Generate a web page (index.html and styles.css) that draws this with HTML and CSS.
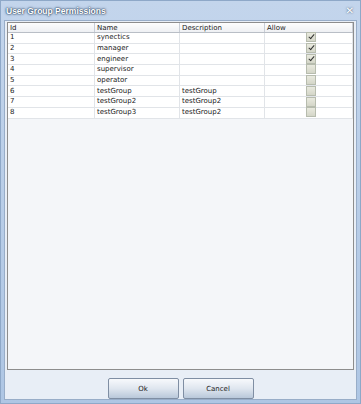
FILE: index.html
```html
<!DOCTYPE html>
<html lang="en">
<head>
  <meta charset="UTF-8" />
  <title>User Group Permissions</title>
  <link rel="stylesheet" href="styles.css">
</head>
<body>
  <div class="window">
    <div class="titlebar">
      <span class="title">User Group Permissions</span>
      <span class="close">&#x2715;</span>
    </div>
    <div class="frame">
      <div class="grid">
        <table>
          <thead>
            <tr>
              <th class="c-id">Id</th>
              <th class="c-name">Name</th>
              <th class="c-desc">Description</th>
              <th class="c-allow">Allow</th>
            </tr>
          </thead>
          <tbody>
            <tr><td>1</td><td>synectics</td><td></td><td class="chk"><span class="box on"></span></td></tr>
            <tr><td>2</td><td>manager</td><td></td><td class="chk"><span class="box on"></span></td></tr>
            <tr><td>3</td><td>engineer</td><td></td><td class="chk"><span class="box on"></span></td></tr>
            <tr><td>4</td><td>supervisor</td><td></td><td class="chk"><span class="box"></span></td></tr>
            <tr><td>5</td><td>operator</td><td></td><td class="chk"><span class="box"></span></td></tr>
            <tr><td>6</td><td>testGroup</td><td>testGroup</td><td class="chk"><span class="box"></span></td></tr>
            <tr><td>7</td><td>testGroup2</td><td>testGroup2</td><td class="chk"><span class="box"></span></td></tr>
            <tr><td>8</td><td>testGroup3</td><td>testGroup2</td><td class="chk"><span class="box"></span></td></tr>
          </tbody>
        </table>
      </div>
      <div class="buttons">
        <button>Ok</button>
        <button>Cancel</button>
      </div>
    </div>
  </div>
</body>
</html>
```

FILE: styles.css
```css
body {
  margin: 0;
  font-family: "DejaVu Sans", sans-serif;
  background-color: #fff;
}
.window {
  width: 361px;
  height: 404px;
  box-sizing: border-box;
  background: linear-gradient(#c3d5ec, #aec6e4);
  border: 1px solid #8ea8c8;
  display: flex;
  flex-direction: column;
}
.titlebar {
  height: 19px;
  display: flex;
  align-items: center;
  justify-content: space-between;
  padding: 0 6px 0 5px;
}
.title {
  color: #fff;
  font-family: "Liberation Sans", sans-serif;
  font-weight: bold;
  font-size: 8.5px;
  text-shadow: 0 0 2px #2f4662, 0 0 1px #2f4662, 0 0 3px #5b7290;
}
.close {
  color: #fff;
  font-size: 10px;
  text-shadow: 0 0 2px #2f4662;
}
.frame {
  flex: 1;
  margin: 0 3px 3px 3px;
  background-color: #e8eef6;
  border: 1px solid #98adc8;
  display: flex;
  flex-direction: column;
  padding: 1px 2px 0 2px;
}
.grid {
  height: 346px;
  background-color: #f4f6f9;
  border: 1px solid #8d8d8d;
}
table {
  width: 100%;
  border-collapse: collapse;
  font-size: 7px;
  color: #222;
}
th {
  text-align: left;
  font-weight: normal;
  height: 9px;
  padding: 0 2px;
  background: linear-gradient(#fdfdfd, #eef0f3);
  border-right: 1px solid #c9ced6;
  border-bottom: 1px solid #b9bec6;
}
td {
  height: 9.7px;
  padding: 0 2px;
  background-color: #fff;
  border-right: 1px solid #e1e4e8;
  border-bottom: 1px solid #e1e4e8;
  line-height: 9px;
}
.c-id { width: 82px; }
.c-name { width: 80px; }
.c-desc { width: 80px; }
.chk {
  text-align: right;
  padding-right: 36px;
}
.box {
  display: inline-block;
  width: 10px;
  height: 10px;
  margin: -1px 0;
  box-sizing: border-box;
  border: 1px solid #b7bcae;
  background: linear-gradient(#e9eadf, #d4d6c8);
  vertical-align: middle;
  position: relative;
}
.box.on::after {
  content: "";
  position: absolute;
  left: 2.5px;
  top: 0;
  width: 2px;
  height: 5px;
  border: solid #333;
  border-width: 0 1.5px 1.5px 0;
  transform: rotate(40deg);
}
.buttons {
  display: flex;
  justify-content: center;
  gap: 4px;
  padding-top: 8px;
}
button {
  width: 71px;
  height: 21px;
  font-family: "DejaVu Sans", sans-serif;
  font-size: 7px;
  color: #222;
  border: 1px solid #7f8ea3;
  border-radius: 2px;
  background: linear-gradient(#f7f9fc, #dfe6ef 50%, #b9c8da);
}
```
